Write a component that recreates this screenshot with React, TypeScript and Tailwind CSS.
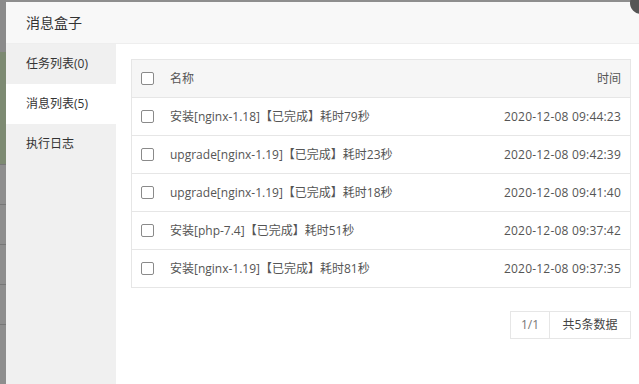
import React from "react";

const rows = [
  { name: "安装[nginx-1.18]【已完成】耗时79秒", time: "2020-12-08 09:44:23" },
  { name: "upgrade[nginx-1.19]【已完成】耗时23秒", time: "2020-12-08 09:42:39" },
  { name: "upgrade[nginx-1.19]【已完成】耗时18秒", time: "2020-12-08 09:41:40" },
  { name: "安装[php-7.4]【已完成】耗时51秒", time: "2020-12-08 09:37:42" },
  { name: "安装[nginx-1.19]【已完成】耗时81秒", time: "2020-12-08 09:37:35" },
];

const tabs = ["任务列表(0)", "消息列表(5)", "执行日志"];

function Check() {
  return <span className="block h-[13px] w-[13px] rounded-[2px] border border-[#8a8a8a] bg-white" />;
}

export default function App() {
  return (
    <div
      className="relative flex h-[384px] w-[639px] overflow-hidden bg-[#8e8e8e] text-[12px] text-[#555]"
      style={{ fontFamily: '"Open Sans", "Noto Sans CJK SC", sans-serif' }}
    >
      {/* page behind the shade */}
      <div className="flex w-[6px] shrink-0 flex-col">
        <div className="h-[52px] bg-[#8b8b8b]" />
        <div className="h-[112px] bg-[#7d8a72]" />
        <div className="h-[40px] border-t border-[#777] bg-[#8e8e8e]" />
        <div className="h-[40px] border-t border-[#777] bg-[#8e8e8e]" />
        <div className="h-[40px] border-t border-[#777] bg-[#8e8e8e]" />
        <div className="h-[40px] border-t border-[#777] bg-[#8e8e8e]" />
        <div className="flex-1 border-t border-[#777] bg-[#8e8e8e]" />
      </div>

      <div className="mt-[2px] flex w-[640px] shrink-0 flex-col bg-white">
        <div className="flex h-[42px] shrink-0 items-center border-b border-[#eee] bg-[#f8f8f8] pl-[20px] text-[14px] text-[#333]">
          消息盒子
        </div>
        <div className="flex flex-1">
          <div className="w-[110px] shrink-0 bg-[#f0f0f0]">
            {tabs.map((t, i) => (
              <div
                key={t}
                className={`flex h-[40px] items-center pl-[20px] text-[#333] ${i === 1 ? "bg-white" : ""}`}
              >
                {t}
              </div>
            ))}
          </div>
          <div className="flex-1 px-[15px] pt-[15px]">
            <div className="border border-[#e6e6e6]">
              <div className="flex h-[37px] items-center bg-[#f6f6f6] pl-[9px] pr-[9px]">
                <Check />
                <span className="ml-[16px] flex-1">名称</span>
                <span>时间</span>
              </div>
              {rows.map((r) => (
                <div key={r.time} className="flex h-[38px] items-center border-t border-[#e6e6e6] pl-[9px] pr-[9px]">
                  <Check />
                  <span className="ml-[16px] flex-1">{r.name}</span>
                  <span className="tracking-[0.2px]">{r.time}</span>
                </div>
              ))}
            </div>
            <div className="mt-[23px] flex justify-end">
              <div className="flex h-[28px] border border-[#e6e6e6]">
                <span className="flex w-[38px] items-center justify-center text-[#777]">1/1</span>
                <span className="flex w-[81px] items-center justify-center border-l border-[#e6e6e6] text-[#444]">共5条数据</span>
              </div>
            </div>
          </div>
        </div>
      </div>

      <div className="absolute right-[-13px] top-[-8px] h-[22px] w-[22px] rounded-full bg-[#555]" />
    </div>
  );
}
